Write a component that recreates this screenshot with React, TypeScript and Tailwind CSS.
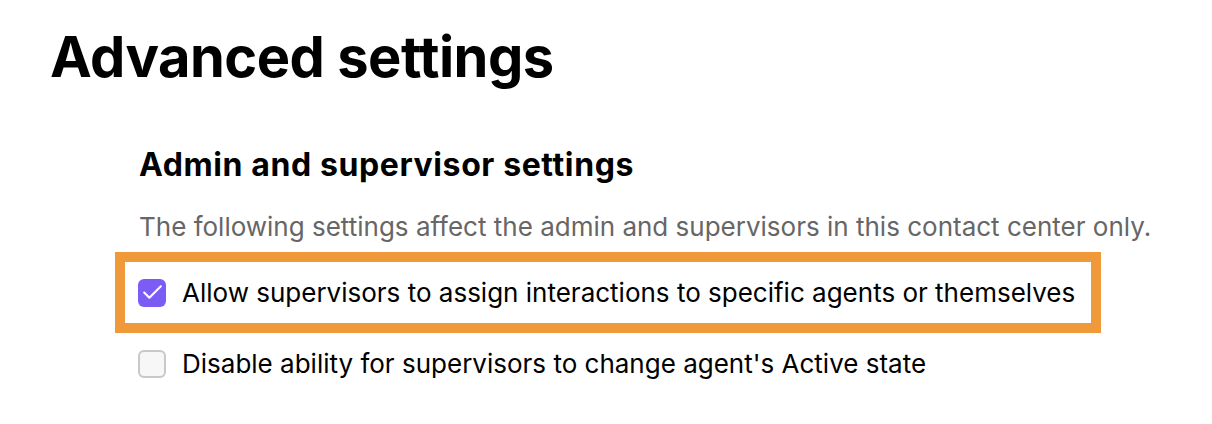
import { Check } from 'lucide-react'

function Checkbox({ checked }: { checked: boolean }) {
  return checked ? (
    <span className="flex h-[28px] w-[28px] shrink-0 items-center justify-center rounded-[6px] bg-[#7B5CF5]">
      <Check className="h-[25px] w-[25px] text-white" strokeWidth={2} />
    </span>
  ) : (
    <span className="h-[28px] w-[28px] shrink-0 rounded-[6px] border-2 border-[#c8c8c8] bg-[#f7f7f7]" />
  )
}

export default function App() {
  return (
    <div className="min-h-screen bg-white pl-[50px] pt-[29px] font-['Inter',sans-serif] text-black">
      <h1 className="text-[56px] font-bold leading-none tracking-[-0.5px]">Advanced settings</h1>

      <div className="ml-[89px] mt-[64px]">
        <h2 className="text-[32px] font-bold leading-none tracking-[0.6px]">Admin and supervisor settings</h2>
        <p className="mt-[33px] text-[26px] leading-none text-[#666666]">
          The following settings affect the admin and supervisors in this contact center only.
        </p>

        <div className="-ml-[24px] mt-[12px] flex h-[81px] w-[986px] items-center gap-[16px] border-[10px] border-[#F0993A] px-[13px]">
          <Checkbox checked />
          <span className="text-[26px] leading-none">
            Allow supervisors to assign interactions to specific agents or themselves
          </span>
        </div>

        <div className="-ml-[1px] mt-[17px] flex items-center gap-[16px]">
          <Checkbox checked={false} />
          <span className="text-[26px] leading-none">
            Disable ability for supervisors to change agent's Active state
          </span>
        </div>
      </div>
    </div>
  )
}
